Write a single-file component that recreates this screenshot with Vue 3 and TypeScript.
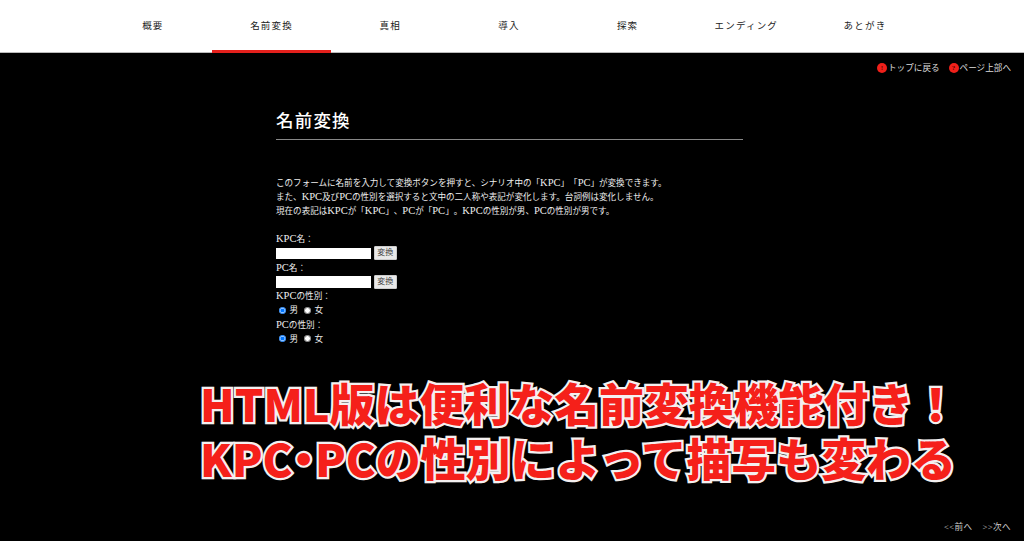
<script setup lang="ts">
const navItems: string[] = ['概要', '名前変換', '真相', '導入', '探索', 'エンディング', 'あとがき']
const activeItem = '名前変換'
const intro: string[] = [
  'このフォームに名前を入力して変換ボタンを押すと、シナリオ中の「KPC」「PC」が変換できます。',
  'また、KPC及びPCの性別を選択すると文中の二人称や表記が変化します。台詞例は変化しません。',
  '現在の表記はKPCが「KPC」、PCが「PC」。KPCの性別が男、PCの性別が男です。',
]
// The original's Latin letters run larger than its Japanese text, so they get their own span.
const parts = (text: string): string[] => text.split(/([A-Za-z]+)/).filter(Boolean)
const isLatin = (part: string): boolean => /^[A-Za-z]+$/.test(part)
</script>

<template>
  <div class="page">
    <header class="header">
      <nav class="nav">
        <a v-for="item in navItems" :key="item" class="nav-item" :class="{ active: item === activeItem }">{{ item }}</a>
      </nav>
    </header>

    <main class="main">
      <div class="top-links">
        <a class="top-link"><span class="badge">!</span>トップに戻る</a>
        <a class="top-link"><span class="badge">?</span>ページ上部へ</a>
      </div>

      <section class="content">
        <h1 class="title">名前変換</h1>
        <div class="intro">
          <p v-for="line in intro" :key="line"><template v-for="(part, i) in parts(line)" :key="i"><span v-if="isLatin(part)" class="latin">{{ part }}</span><template v-else>{{ part }}</template></template></p>
        </div>
        <form class="form" @submit.prevent>
          <div class="label"><span class="latin">KPC</span>名：</div>
          <div class="field"><input class="text" type="text" /><button class="btn" type="button">変換</button></div>
          <div class="label"><span class="latin">PC</span>名：</div>
          <div class="field"><input class="text" type="text" /><button class="btn" type="button">変換</button></div>
          <div class="label"><span class="latin">KPC</span>の性別：</div>
          <div class="radios">
            <input class="radio" type="radio" name="kpc" checked /><span>男</span>
            <input class="radio" type="radio" name="kpc" /><span>女</span>
          </div>
          <div class="label"><span class="latin">PC</span>の性別：</div>
          <div class="radios">
            <input class="radio" type="radio" name="pc" checked /><span>男</span>
            <input class="radio" type="radio" name="pc" /><span>女</span>
          </div>
        </form>
      </section>

      <div class="caption">
        <div>HTML版は便利な名前変換機能付き！</div>
        <div>KPC<span class="dot">・</span>PCの性別によって描写も変わる</div>
      </div>

      <div class="pager"><a>&lt;&lt;前へ</a><a>&gt;&gt;次へ</a></div>
    </main>
  </div>
</template>

<style>
html, body { margin: 0; background: #000; }
</style>

<style scoped>
.page {
  width: 1024px;
  height: 541px;
  overflow: hidden;
  display: flex;
  flex-direction: column;
  background: #000;
  font-family: "Liberation Serif", "Noto Sans CJK JP", serif;
  text-spacing-trim: space-all;
}
.header {
  height: 52px;
  background: #fff;
  border-bottom: 1px solid #bbb;
  flex: none;
}
.nav {
  display: grid;
  grid-template-columns: repeat(7, 118.7px);
  padding-left: 93.5px;
  height: 53px;
}
.nav-item {
  display: block;
  box-sizing: border-box;
  height: 53px;
  padding-top: 18.5px;
  text-align: center;
  font-size: 9.5px;
  line-height: 14px;
  letter-spacing: 1.2px;
  color: #222;
  font-weight: 400;
}
.nav-item.active { border-bottom: 3px solid #e5201c; }

.main {
  position: relative;
  flex: 1;
  color: #e6e6e6;
}
.top-links {
  display: flex;
  justify-content: flex-end;
  gap: 9px;
  padding: 8px 13px 0 0;
  height: 14px;
}
.top-link {
  display: flex;
  align-items: center;
  font-size: 8.6px;
  line-height: 12px;
  color: #ddd;
}
.badge {
  width: 10px;
  height: 10px;
  border-radius: 50%;
  background: #f0201a;
  color: #500;
  font-size: 7px;
  font-weight: 700;
  line-height: 10px;
  text-align: center;
  margin-right: 1px;
}
.content {
  width: 467px;
  margin-left: 276px;
  padding-top: 31px;
}
.title {
  margin: 0;
  height: 34px;
  box-sizing: border-box;
  border-bottom: 1px solid #888;
  font-size: 17.5px;
  line-height: 30px;
  font-weight: 500;
  letter-spacing: 1.2px;
  color: #fff;
}
.intro {
  margin-top: 36px;
  font-size: 8.55px;
  line-height: 14px;
  color: #eee;
}
.intro p { margin: 0; white-space: nowrap; }
.latin { font-size: 10.5px; line-height: 1; }
.form {
  margin-top: 14px;
  font-size: 8.6px;
  color: #eee;
}
.label { height: 14px; line-height: 14px; }
.field {
  display: flex;
  align-items: center;
  gap: 2.5px;
  height: 14.5px;
}
.text {
  box-sizing: border-box;
  width: 95px;
  height: 11.5px;
  margin: 0;
  padding: 0;
  border: 0;
  background: #fff;
}
.btn {
  box-sizing: border-box;
  width: 23.5px;
  height: 14px;
  margin: 0;
  padding: 0;
  border: 1px solid #ccc;
  border-radius: 1px;
  background: #e9e9e9;
  color: #444;
  font-family: inherit;
  font-size: 8px;
  line-height: 12px;
}
.radios {
  display: flex;
  align-items: center;
  height: 14.5px;
  line-height: 14px;
}
.radio {
  width: 7px;
  height: 7px;
  margin: 0 4px 0 2.5px;
}
.radio + span { margin-right: 3px; }
.caption {
  position: absolute;
  left: 200px;
  top: 322px;
  font-family: "Noto Sans CJK JP", sans-serif;
  font-size: 44.9px;
  font-weight: 900;
  line-height: 55px;
  color: #f5201a;
  -webkit-text-stroke: 4.5px #f4f0f0;
  paint-order: stroke fill;
  white-space: nowrap;
}
.dot { font-feature-settings: "palt"; }
.pager {
  position: absolute;
  right: 13px;
  bottom: 8px;
  display: flex;
  gap: 10px;
  font-size: 8.6px;
  line-height: 12px;
  letter-spacing: 0.4px;
  color: #ccc;
}
</style>
